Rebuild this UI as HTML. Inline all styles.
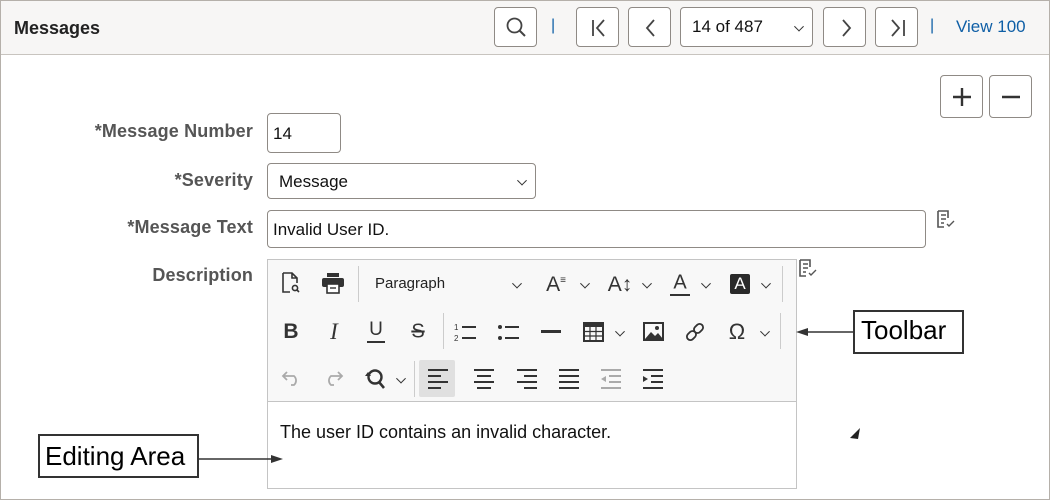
<!DOCTYPE html>
<html><head><meta charset="utf-8"><style>
*{box-sizing:border-box;margin:0;padding:0}
body{width:1050px;height:500px;background:#fff;font-family:"Liberation Sans",Arial,sans-serif;position:relative;overflow:hidden;color:#333}
.a{position:absolute}
.frame{left:0;top:0;width:1050px;height:500px;border:1px solid #b5b0aa}
.hdr{left:1px;top:1px;width:1048px;height:54px;background:#f7f6f5;border-bottom:1px solid #c8c4bf}
.btn{position:absolute;border:1px solid #8f8a85;border-radius:4px;background:#fff;height:40px;top:7px}
.lbl{position:absolute;right:797px;font-weight:bold;font-size:18px;letter-spacing:0.15px;color:#555;text-align:right}
.inp{position:absolute;border:1px solid #8f8a85;border-radius:4px;background:#fff;font-size:17px;color:#111}
.ti{position:absolute;font-size:20px;color:#333;transform:translate(-50%,-50%)}
.chev{position:absolute;width:7px;height:7px;border-right:1.6px solid #333;border-bottom:1.6px solid #333;transform:translate(-50%,-70%) rotate(45deg)}
.sep{position:absolute;width:1px;background:#ccc}
svg{position:absolute;overflow:visible}
</style></head><body>
<div class="a frame"></div>
<div class="a hdr"></div>
<div class="a" style="left:14px;top:18px;font-size:18px;font-weight:bold;color:#222">Messages</div>
<div class="btn" style="left:494px;width:43px"><svg style="left:10px;top:8px" width="22" height="22"><circle cx="9.5" cy="9.5" r="7" fill="none" stroke="#444" stroke-width="1.8"/><line x1="14.5" y1="14.5" x2="20" y2="20" stroke="#444" stroke-width="2"/></svg></div>
<div class="a" style="left:551px;top:17px;color:#0f5fa6;font-size:16px">|</div>
<div class="btn" style="left:576px;width:43px"><svg style="left:14px;top:11px" width="16" height="18"><line x1="2" y1="1" x2="2" y2="17" stroke="#444" stroke-width="1.8"/><polyline points="13,1 6,9 13,17" fill="none" stroke="#444" stroke-width="1.8"/></svg></div>
<div class="btn" style="left:628px;width:43px"><svg style="left:16px;top:11px" width="16" height="18"><polyline points="9,1 2,9 9,17" fill="none" stroke="#444" stroke-width="1.8"/></svg></div>
<div class="btn" style="left:680px;width:133px;font-size:17px;color:#111;padding:9px 0 0 11px">14 of 487<div class="chev" style="left:118px;top:20px"></div></div>
<div class="btn" style="left:823px;width:43px"><svg style="left:18px;top:11px" width="16" height="18"><polyline points="1,1 8,9 1,17" fill="none" stroke="#444" stroke-width="1.8"/></svg></div>
<div class="btn" style="left:875px;width:43px"><svg style="left:14px;top:11px" width="16" height="18"><polyline points="2,1 9,9 2,17" fill="none" stroke="#444" stroke-width="1.8"/><line x1="14" y1="1" x2="14" y2="17" stroke="#444" stroke-width="1.8"/></svg></div>
<div class="a" style="left:930px;top:17px;color:#0f5fa6;font-size:16px">|</div>
<div class="a" style="left:956px;top:17px;color:#0f5fa6;font-size:17px">View 100</div>

<div class="btn" style="left:940px;top:75px;width:43px;height:43px"><svg style="left:11px;top:11px" width="20" height="20"><line x1="10" y1="1" x2="10" y2="19" stroke="#333" stroke-width="2.4"/><line x1="1" y1="10" x2="19" y2="10" stroke="#333" stroke-width="2.4"/></svg></div>
<div class="btn" style="left:989px;top:75px;width:43px;height:43px"><svg style="left:11px;top:11px" width="20" height="20"><line x1="1" y1="10" x2="19" y2="10" stroke="#333" stroke-width="2.4"/></svg></div>

<div class="lbl" style="top:121px">*Message Number</div>
<div class="lbl" style="top:170px">*Severity</div>
<div class="lbl" style="top:217px">*Message Text</div>
<div class="lbl" style="top:265px">Description</div>

<div class="inp" style="left:267px;top:113px;width:74px;height:40px;padding:10px 0 0 5px">14</div>
<div class="inp" style="left:267px;top:163px;width:269px;height:36px;padding:8px 0 0 11px">Message<div class="chev" style="left:254px;top:18px"></div></div>
<div class="inp" style="left:267px;top:210px;width:659px;height:38px;padding:9px 0 0 5px">Invalid User ID.</div>

<svg style="left:936px;top:210px" width="20" height="20"><path d="M2 1h10v7M2 1v16h6M5 5h5M5 9h5M5 13h3" fill="none" stroke="#555" stroke-width="1.6"/><polyline points="11,14 13,16 18,11" fill="none" stroke="#555" stroke-width="1.4"/></svg>
<svg style="left:798px;top:259px" width="20" height="20"><path d="M2 1h10v7M2 1v16h6M5 5h5M5 9h5M5 13h3" fill="none" stroke="#555" stroke-width="1.6"/><polyline points="11,14 13,16 18,11" fill="none" stroke="#555" stroke-width="1.4"/></svg>

<div class="a" style="left:267px;top:259px;width:530px;height:230px;border:1px solid #c4c4c4;background:#fff"></div>
<div class="a" style="left:268px;top:260px;width:528px;height:142px;background:#f8f8f8;border-bottom:1px solid #c4c4c4"></div>
<div class="a" style="left:419px;top:360px;width:36px;height:37px;background:#e0e0e0;border-radius:2px"></div>
<div class="sep" style="left:358px;top:266px;height:36px"></div>
<div class="sep" style="left:782px;top:266px;height:36px"></div>
<div class="sep" style="left:443px;top:313px;height:36px"></div>
<div class="sep" style="left:780px;top:313px;height:36px"></div>
<div class="sep" style="left:414px;top:361px;height:36px"></div>

<svg style="left:281px;top:272px" width="20" height="22"><path d="M2 1h9l5 5v5M2 1v19h7M11 1v5h5" fill="none" stroke="#333" stroke-width="1.6"/><circle cx="14" cy="16" r="2.6" fill="none" stroke="#333" stroke-width="1.6"/><line x1="16" y1="18" x2="18" y2="20" stroke="#333" stroke-width="1.6"/></svg>
<svg style="left:321px;top:272px" width="24" height="22"><rect x="6" y="1" width="12" height="4" fill="#333"/><rect x="1" y="6" width="22" height="9" rx="2" fill="#333"/><rect x="6" y="12" width="12" height="9" fill="#fff" stroke="#333" stroke-width="1.6"/><line x1="9" y1="16" x2="15" y2="16" stroke="#333" stroke-width="1.4"/></svg>
<div class="a" style="left:375px;top:275px;font-size:15px;color:#222">Paragraph</div>
<div class="chev" style="left:517px;top:285px"></div>
<div class="ti" style="left:556px;top:285px;font-size:21px">A<span style="font-size:10px;vertical-align:8px">≡</span></div>
<div class="chev" style="left:585px;top:285px"></div>
<div class="ti" style="left:620px;top:285px;font-size:21px">A↕</div>
<div class="chev" style="left:647px;top:285px"></div>
<div class="ti" style="left:680px;top:283px;font-size:20px">A</div>
<div class="a" style="left:670px;top:294px;width:20px;height:2px;background:#333"></div>
<div class="chev" style="left:706px;top:285px"></div>
<div class="a" style="left:730px;top:274px;width:20px;height:20px;background:#2a2a2a;border-radius:2px;color:#fff;font-size:17px;text-align:center;line-height:20px">A</div>
<div class="chev" style="left:766px;top:285px"></div>

<div class="ti" style="left:291px;top:332px;font-weight:bold;font-size:21px">B</div>
<div class="ti" style="left:334px;top:332px;font-family:'Liberation Serif',serif;font-style:italic;font-size:23px">I</div>
<div class="ti" style="left:376px;top:330px;font-size:19px">U</div><div class="a" style="left:367px;top:341px;width:18px;height:1.6px;background:#333"></div>
<div class="ti" style="left:418px;top:332px;font-size:20px;text-decoration:line-through">S</div>
<svg style="left:454px;top:322px" width="24" height="20"><text x="0" y="8" font-size="8" font-family="Liberation Sans" fill="#333">1</text><text x="0" y="19" font-size="8" font-family="Liberation Sans" fill="#333">2</text><line x1="8" y1="5" x2="22" y2="5" stroke="#333" stroke-width="2"/><line x1="8" y1="16" x2="22" y2="16" stroke="#333" stroke-width="2"/></svg>
<svg style="left:497px;top:322px" width="24" height="20"><circle cx="3" cy="5" r="2" fill="#333"/><circle cx="3" cy="16" r="2" fill="#333"/><line x1="8" y1="5" x2="22" y2="5" stroke="#333" stroke-width="2"/><line x1="8" y1="16" x2="22" y2="16" stroke="#333" stroke-width="2"/></svg>
<div class="a" style="left:541px;top:330px;width:20px;height:3px;background:#333"></div>
<svg style="left:583px;top:322px" width="21" height="20"><rect x="1" y="1" width="19" height="18" fill="none" stroke="#333" stroke-width="2"/><rect x="1" y="1" width="19" height="4" fill="#333"/><path d="M7 5v14M13 5v14M1 9.5h19M1 14h19" stroke="#333" stroke-width="1.2"/></svg>
<div class="chev" style="left:620px;top:333px"></div>
<svg style="left:643px;top:322px" width="21" height="19"><rect x="1" y="1" width="19" height="17" fill="none" stroke="#333" stroke-width="2"/><path d="M2 17l6-7 4 4 3-3 5 6z" fill="#333"/><circle cx="14" cy="6" r="2" fill="#333"/></svg>
<svg style="left:685px;top:322px" width="20" height="20"><g transform="rotate(-45 10 10)" fill="none" stroke="#333" stroke-width="1.8"><rect x="0" y="6.5" width="10" height="7" rx="3.5"/><rect x="10" y="6.5" width="10" height="7" rx="3.5"/></g></svg>
<div class="ti" style="left:737px;top:332px;font-size:22px">Ω</div>
<div class="chev" style="left:765px;top:333px"></div>

<svg style="left:281px;top:370px" width="22" height="16"><path d="M6 2L2 6l4 4M2 6h11a6 6 0 0 1 0 9h-3" fill="none" stroke="#aaa" stroke-width="1.8"/></svg>
<svg style="left:322px;top:370px" width="22" height="16"><path d="M16 2l4 4-4 4M20 6H9a6 6 0 0 0 0 9h3" fill="none" stroke="#aaa" stroke-width="1.8"/></svg>
<svg style="left:364px;top:367px" width="24" height="24"><circle cx="11" cy="10" r="6.5" fill="none" stroke="#333" stroke-width="2.4"/><line x1="15" y1="15" x2="20" y2="21" stroke="#333" stroke-width="2.6"/><path d="M1 9l3-4 3 4" fill="#333"/></svg>
<div class="chev" style="left:401px;top:380px"></div>
<svg style="left:427px;top:368px" width="22" height="22"><path d="M1 2h20M1 8h13M1 14h20M1 20h13" stroke="#333" stroke-width="2"/></svg>
<svg style="left:473px;top:368px" width="22" height="22"><path d="M1 2h20M4 8h14M1 14h20M4 20h14" stroke="#333" stroke-width="2"/></svg>
<svg style="left:516px;top:368px" width="22" height="22"><path d="M1 2h20M8 8h13M1 14h20M8 20h13" stroke="#333" stroke-width="2"/></svg>
<svg style="left:558px;top:368px" width="22" height="22"><path d="M1 2h20M1 8h20M1 14h20M1 20h20" stroke="#333" stroke-width="2"/></svg>
<svg style="left:600px;top:368px" width="22" height="22"><path d="M1 2h20M9 8h12M9 14h12M1 20h20" stroke="#aaa" stroke-width="2"/><path d="M6 8l-5 3 5 3z" fill="#aaa"/></svg>
<svg style="left:642px;top:368px" width="22" height="22"><path d="M1 2h20M9 8h12M9 14h12M1 20h20" stroke="#333" stroke-width="2"/><path d="M1 8l5 3-5 3z" fill="#333"/></svg>

<div class="a" style="left:280px;top:422px;font-size:18px;color:#111">The user ID contains an invalid character.</div>

<div class="a" style="left:853px;top:310px;width:111px;height:44px;border:2px solid #333;background:#fff;font-size:26px;color:#000;padding:3px 0 0 6px">Toolbar</div>
<svg style="left:796px;top:326px" width="60" height="12"><line x1="10" y1="6" x2="57" y2="6" stroke="#333" stroke-width="1.6"/><path d="M0 6l12-4v8z" fill="#333"/></svg>
<div class="a" style="left:38px;top:434px;width:161px;height:44px;border:2px solid #333;background:#fff;font-size:26px;color:#000;padding:5px 0 0 5px">Editing Area</div>
<svg style="left:198px;top:453px" width="86" height="12"><line x1="0" y1="6" x2="76" y2="6" stroke="#333" stroke-width="1.6"/><path d="M85 6l-12-4v8z" fill="#333"/></svg>
<svg style="left:850px;top:428px" width="12" height="12"><path d="M0 10L10 0 8 11z" fill="#222"/></svg>
</body></html>
